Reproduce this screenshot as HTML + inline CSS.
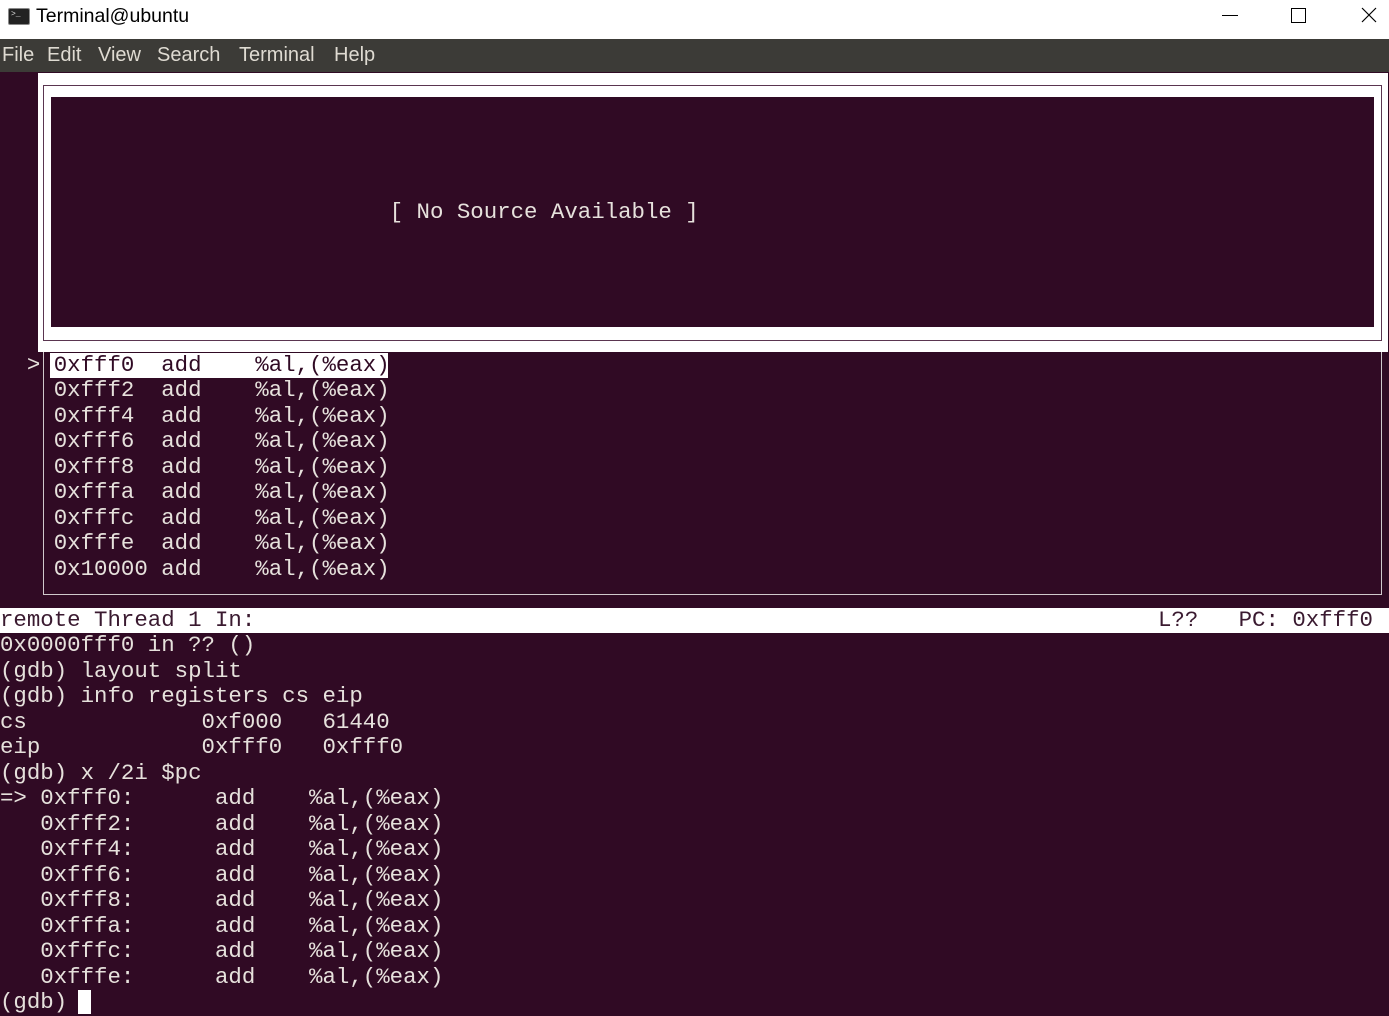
<!DOCTYPE html>
<html><head><meta charset="utf-8"><style>
body{margin:0;width:1389px;height:1014px;overflow:hidden;background:#300a24;position:relative;font-family:"Liberation Sans",sans-serif}
.abs{position:absolute}
#title{left:0;top:0;width:1389px;height:39px;background:#fff}
#menu{left:0;top:39px;width:1389px;height:33px;background:#3c3b37;color:#dfdbd2;font-size:20px;line-height:32px}
#menu span{position:absolute;top:0}
pre{position:absolute;left:0;top:72px;margin:0;font-family:"Liberation Mono",monospace;font-size:22.4px;line-height:25.5px;color:#e6e1dc;white-space:pre;letter-spacing:0}
</style></head><body>
<div class="abs" id="title">
<div class="abs" style="left:8px;top:8px;width:20px;height:15px;background:#222;border:1px solid #888;border-radius:2px"></div>
<div class="abs" style="left:11px;top:10px;color:#ddd;font-size:8px;font-family:'Liberation Mono'">&gt;_</div>
<div class="abs" style="left:36px;top:5px;font-size:19.5px;color:#000">Terminal@ubuntu</div>
<div class="abs" style="left:1222px;top:15px;width:16px;height:1px;background:#000"></div>
<div class="abs" style="left:1291px;top:8px;width:13px;height:13px;border:1px solid #000"></div>
<svg class="abs" style="left:1361px;top:7px" width="16" height="16"><path d="M1 1L15 15M15 1L1 15" stroke="#000" stroke-width="1.2"/></svg>
</div>
<div class="abs" id="menu"><span style="left:2px">File</span><span style="left:47px">Edit</span><span style="left:98px">View</span><span style="left:157px">Search</span><span style="left:239px">Terminal</span><span style="left:334px">Help</span></div>
<div class="abs" style="left:38px;top:73px;width:1350px;height:279px;background:#fff"></div>
<div class="abs" style="left:43px;top:85px;width:1337px;height:254px;border:1.5px solid #5a3550"></div>
<div class="abs" style="left:51px;top:97px;width:1323px;height:230px;background:#300a24"></div>
<div class="abs" style="left:43px;top:352px;width:1337px;height:242px;border:1.5px solid #d0c8cc;border-top:none"></div>
<div class="abs" style="left:50px;top:353px;width:338px;height:25px;background:#fff"></div>
<div class="abs" style="left:0;top:608px;width:1389px;height:25px;background:#fff"></div>
<div class="abs" style="left:78px;top:990px;width:13px;height:24px;background:#fff"></div>
<pre style="left:1158px;top:608px;color:#3a1a30">L??   PC: 0xfff0</pre>
<pre>





                             [ No Source Available ]





  &gt; <span style="color:#300a24">0xfff0  add    %al,(%eax)</span>
    0xfff2  add    %al,(%eax)
    0xfff4  add    %al,(%eax)
    0xfff6  add    %al,(%eax)
    0xfff8  add    %al,(%eax)
    0xfffa  add    %al,(%eax)
    0xfffc  add    %al,(%eax)
    0xfffe  add    %al,(%eax)
    0x10000 add    %al,(%eax)

<span style="color:#3a1a30">remote Thread 1 In:</span>
0x0000fff0 in ?? ()
(gdb) layout split
(gdb) info registers cs eip
cs             0xf000   61440
eip            0xfff0   0xfff0
(gdb) x /2i $pc
=&gt; 0xfff0:      add    %al,(%eax)
   0xfff2:      add    %al,(%eax)
   0xfff4:      add    %al,(%eax)
   0xfff6:      add    %al,(%eax)
   0xfff8:      add    %al,(%eax)
   0xfffa:      add    %al,(%eax)
   0xfffc:      add    %al,(%eax)
   0xfffe:      add    %al,(%eax)
(gdb) </pre>
</body></html>
